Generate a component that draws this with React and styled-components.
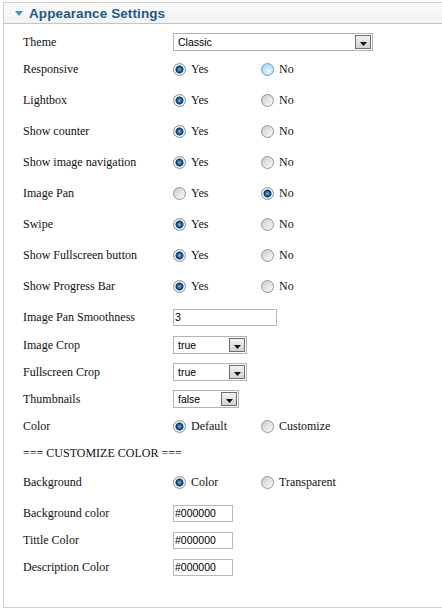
import React from "react";
import styled, { createGlobalStyle } from "styled-components";

const GlobalStyle = createGlobalStyle`
  html, body {
    margin: 0;
    padding: 0;
    background: #fff;
    overflow: hidden;
  }
`;

const Panel = styled.div`
  margin: 2px 0 0 3px;
  border: 1px solid #cfcfcf;
  border-right: 0;
  background: #fff;
  font-family: "Liberation Serif", "Times New Roman", serif;
  font-size: 12px;
  color: #111;
`;

const Header = styled.div`
  display: flex;
  align-items: center;
  gap: 6px;
  height: 20px;
  padding-left: 11px;
  background: linear-gradient(#fbfbfb, #f3f3f3);
  border-bottom: 1px solid #c4c4c4;
`;

const Title = styled.h3`
  margin: 0;
  font-family: "Liberation Sans", Arial, sans-serif;
  font-size: 13.5px;
  font-weight: bold;
  color: #1b5b8c;
  letter-spacing: 0.1px;
`;

const Body = styled.div`
  padding: 8px 0 30px 19px;
`;

const Row = styled.div`
  display: grid;
  grid-template-columns: 150px 1fr;
  align-items: center;
  height: 20px;
  margin-bottom: ${(p) => p.$gap}px;
`;

const Label = styled.label`
  white-space: nowrap;
`;

const Note = styled.div`
  grid-column: 1 / -1;
  white-space: nowrap;
`;

const Options = styled.div`
  display: flex;
  align-items: center;
`;

const Option = styled.label`
  display: flex;
  align-items: center;
  gap: 5px;
  width: 88px;
  white-space: nowrap;
`;

const Radio = styled.input.attrs({ type: "radio" })`
  appearance: none;
  -webkit-appearance: none;
  margin: 0;
  width: 13px;
  height: 13px;
  border-radius: 50%;
  border: 1px solid ${(p) => (p.$hover ? "#5aa9dd" : "#959595")};
  background: ${(p) =>
    p.$hover
      ? "radial-gradient(circle at 60% 65%, #eef8fe 0, #c2e5f9 45%, #8ccbf0 100%)"
      : "linear-gradient(135deg, #c9c9c9 0%, #e6e6e6 55%, #fbfbfb 100%)"};
  &:checked {
    background: radial-gradient(
      circle at 50% 50%,
      #7ccdf5 0,
      #2a86c8 1.4px,
      #0b3b6b 3.2px,
      #3a5f80 3.7px,
      #f4f4f4 4.4px,
      #d6d6d6 6.5px
    );
  }
`;

const SelectWrap = styled.span`
  display: inline-flex;
  align-items: center;
  box-sizing: border-box;
  width: ${(p) => p.$w}px;
  height: 18px;
  border: 1px solid #b4b4b4;
  background: #fff;
  padding-right: 1px;
`;

const Select = styled.select`
  appearance: none;
  -webkit-appearance: none;
  flex: 1;
  min-width: 0;
  height: 100%;
  border: 0;
  margin: 0;
  padding: 0 0 0 4px;
  background: transparent;
  font-family: "Liberation Sans", Arial, sans-serif;
  font-size: 10.5px;
  color: #000;
  outline: none;
`;

const ArrowBtn = styled.span`
  display: flex;
  align-items: center;
  justify-content: center;
  box-sizing: border-box;
  width: 16px;
  height: 14px;
  border: 1px solid #6f6f6f;
  background: linear-gradient(#f2f2f2, #d2d2d2);
  pointer-events: none;
`;

const TextInput = styled.input.attrs({ type: "text" })`
  box-sizing: border-box;
  width: ${(p) => p.$w}px;
  height: 17px;
  margin: 0;
  padding: 0 0 0 1px;
  border: 1px solid #b9b9b9;
  font-family: "Liberation Sans", Arial, sans-serif;
  font-size: 10.5px;
  color: #000;
  outline: none;
`;

const Caret = () => (
  <svg width="8" height="5" viewBox="0 0 8 5">
    <path d="M0 0h8L4 5z" fill="#2b9fd9" />
  </svg>
);

const DownArrow = () => (
  <svg width="7" height="4" viewBox="0 0 7 4" style={{ marginTop: 3 }}>
    <path d="M0 0h7L3.5 4z" fill="#111" />
  </svg>
);

const Dropdown = ({ w, value, options }) => (
  <SelectWrap $w={w}>
    <Select defaultValue={value}>
      {options.map((o) => (
        <option key={o}>{o}</option>
      ))}
    </Select>
    <ArrowBtn>
      <DownArrow />
    </ArrowBtn>
  </SelectWrap>
);

const RadioPair = ({ name, options, checked, hover }) => (
  <Options>
    {options.map((o, i) => (
      <Option key={o}>
        <Radio name={name} defaultChecked={i === checked} $hover={i === hover} />
        {o}
      </Option>
    ))}
  </Options>
);

const yesNo = ["Yes", "No"];

const radioRows = [
  { label: "Responsive", checked: 0, hover: 1 },
  { label: "Lightbox", checked: 0 },
  { label: "Show counter", checked: 0 },
  { label: "Show image navigation", checked: 0 },
  { label: "Image Pan", checked: 1 },
  { label: "Swipe", checked: 0 },
  { label: "Show Fullscreen button", checked: 0 },
  { label: "Show Progress Bar", checked: 0 },
];

const colorRows = ["Background color", "Tittle Color", "Description Color"];

export default function App() {
  return (
    <>
      <GlobalStyle />
      <Panel>
        <Header>
          <Caret />
          <Title>Appearance Settings</Title>
        </Header>
        <Body>
          <Row $gap={7}>
            <Label>Theme</Label>
            <div>
              <Dropdown w={200} value="Classic" options={["Classic", "Modern"]} />
            </div>
          </Row>
          {radioRows.map((r) => (
            <Row key={r.label} $gap={11}>
              <Label>{r.label}</Label>
              <RadioPair
                name={r.label}
                options={yesNo}
                checked={r.checked}
                hover={r.hover}
              />
            </Row>
          ))}
          <Row $gap={8}>
            <Label>Image Pan Smoothness</Label>
            <div>
              <TextInput $w={104} defaultValue="3" />
            </div>
          </Row>
          <Row $gap={7}>
            <Label>Image Crop</Label>
            <div>
              <Dropdown w={74} value="true" options={["true", "false"]} />
            </div>
          </Row>
          <Row $gap={7}>
            <Label>Fullscreen Crop</Label>
            <div>
              <Dropdown w={74} value="true" options={["true", "false"]} />
            </div>
          </Row>
          <Row $gap={7}>
            <Label>Thumbnails</Label>
            <div>
              <Dropdown w={66} value="false" options={["true", "false"]} />
            </div>
          </Row>
          <Row $gap={7}>
            <Label>Color</Label>
            <RadioPair name="color" options={["Default", "Customize"]} checked={0} />
          </Row>
          <Row $gap={9}>
            <Note>=== CUSTOMIZE COLOR ===</Note>
          </Row>
          <Row $gap={11}>
            <Label>Background</Label>
            <RadioPair name="bg" options={["Color", "Transparent"]} checked={0} />
          </Row>
          {colorRows.map((c, i) => (
            <Row key={c} $gap={i === colorRows.length - 1 ? 0 : 7}>
              <Label>{c}</Label>
              <div>
                <TextInput $w={60} defaultValue="#000000" />
              </div>
            </Row>
          ))}
        </Body>
      </Panel>
    </>
  );
}
